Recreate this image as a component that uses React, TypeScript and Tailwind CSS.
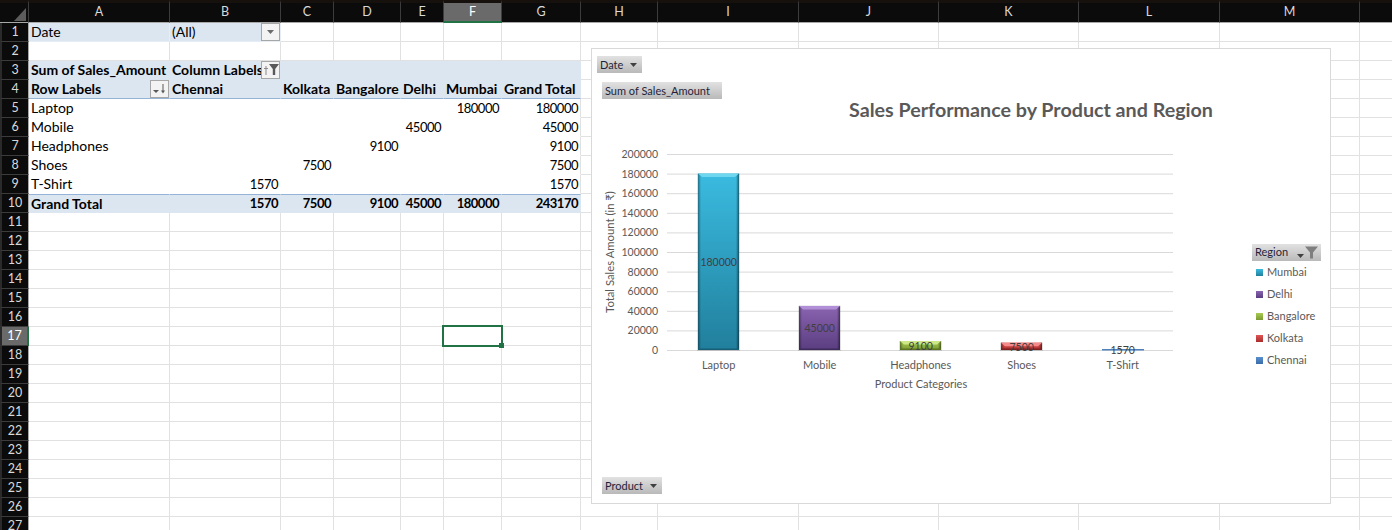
import React from 'react';

const columns = ['A', 'B', 'C', 'D', 'E', 'F', 'G', 'H', 'I', 'J', 'K', 'L', 'M', ''];
const rowNumbers = Array.from({ length: 27 }, (_, i) => i + 1);

type CellData = { text: string; bold?: boolean; right?: boolean };

const pivot: Record<string, CellData> = {
  A1: { text: 'Date' },
  B1: { text: '(All)' },
  A3: { text: 'Sum of Sales_Amount', bold: true },
  B3: { text: 'Column Labels', bold: true },
  A4: { text: 'Row Labels', bold: true },
  B4: { text: 'Chennai', bold: true },
  C4: { text: 'Kolkata', bold: true },
  D4: { text: 'Bangalore', bold: true },
  E4: { text: 'Delhi', bold: true },
  F4: { text: 'Mumbai', bold: true },
  G4: { text: 'Grand Total', bold: true },
  A5: { text: 'Laptop' },
  F5: { text: '180000', right: true },
  G5: { text: '180000', right: true },
  A6: { text: 'Mobile' },
  E6: { text: '45000', right: true },
  G6: { text: '45000', right: true },
  A7: { text: 'Headphones' },
  D7: { text: '9100', right: true },
  G7: { text: '9100', right: true },
  A8: { text: 'Shoes' },
  C8: { text: '7500', right: true },
  G8: { text: '7500', right: true },
  A9: { text: 'T-Shirt' },
  B9: { text: '1570', right: true },
  G9: { text: '1570', right: true },
  A10: { text: 'Grand Total', bold: true },
  B10: { text: '1570', bold: true, right: true },
  C10: { text: '7500', bold: true, right: true },
  D10: { text: '9100', bold: true, right: true },
  E10: { text: '45000', bold: true, right: true },
  F10: { text: '180000', bold: true, right: true },
  G10: { text: '243170', bold: true, right: true },
};

function cellStyle(col: string, row: number) {
  const inTable = col !== '' && 'ABCDEFG'.includes(col);
  if (row === 1 && (col === 'A' || col === 'B')) return 'bg-[#dce6f1] border-b border-r border-[#e6edf5]';
  if (inTable && row === 3) return 'bg-[#dce6f1] border-b border-r border-[#dce6f1]';
  if (inTable && row === 10) return 'bg-[#dce6f1] border-t border-t-[#95b3d7] border-b border-r border-[#dce6f1]';
  if (inTable && row === 4) return 'bg-[#dce6f1] border-b border-b-[#95b3d7] border-r border-r-[#dce6f1]';
  if (col === 'G' && row >= 5 && row <= 9) return 'bg-white border-b border-b-white border-r border-r-[#e1e1e1]';
  if (inTable && row >= 5 && row <= 9) return 'bg-white border-b border-r border-white';
  return 'bg-white border-b border-r border-[#e1e1e1]';
}

function SheetButton({ children, className }: { children: React.ReactNode; className: string }) {
  return (
    <div className={`absolute flex h-[18px] w-[19px] items-center justify-center border border-[#a6a6a6] bg-[#f3f3f3] ${className}`}>
      {children}
    </div>
  );
}

function Arrow({ fill = '#6b6b6b' }: { fill?: string }) {
  return (
    <svg width="7" height="4" viewBox="0 0 7 4">
      <polygon points="0,0 7,0 3.5,4" fill={fill} />
    </svg>
  );
}

function Funnel({ fill = '#595959', width = 10, height = 10 }: { fill?: string; width?: number; height?: number }) {
  return (
    <svg width={width} height={height} viewBox="0 0 13 12">
      <polygon points="0,0 13,0 8,6 8,12 5,12 5,6" fill={fill} />
    </svg>
  );
}

function FilterIcon() {
  return (
    <svg width="16" height="12" viewBox="0 0 16 12">
      <rect x="2.5" y="2" width="1" height="9" fill="#8a8a8a" />
      <rect x="1" y="4" width="4" height="1" fill="#8a8a8a" />
      <polygon points="6,0 16,0 12.2,5 12.2,11 9.8,11 9.8,5" fill="#595959" />
    </svg>
  );
}

function SortIcon() {
  return (
    <svg width="13" height="10" viewBox="0 0 13 10">
      <polygon points="0,6 6,6 3,9" fill="#595959" />
      <rect x="9.5" y="0" width="1" height="8" fill="#595959" />
      <polygon points="8,6.5 12,6.5 10,9.5" fill="#595959" />
    </svg>
  );
}

function FieldButton({ label, className, children }: { label: string; className: string; children?: React.ReactNode }) {
  return (
    <div className={`absolute flex h-[17px] items-center bg-gradient-to-b from-[#e2e2e2] to-[#b9b9b9] pl-[3px] text-[11px] text-[#1f1f3a] ${className}`}>
      <span>{label}</span>
      {children}
    </div>
  );
}

const ticks = [0, 20000, 40000, 60000, 80000, 100000, 120000, 140000, 160000, 180000, 200000];

const bars = [
  { label: 'Laptop', value: 180000, x: 698, top: '#3abbe0', bottom: '#217f9c', edge: '#175f76', light: '#6fd6f0', labelY: 266 },
  { label: 'Mobile', value: 45000, x: 799, top: '#8a64b0', bottom: '#5a3d80', edge: '#3f2a5c', light: '#b18fd6', labelY: 332 },
  { label: 'Headphones', value: 9100, x: 900, top: '#a9cc52', bottom: '#7b9a32', edge: '#5d7624', light: '#cfe887', labelY: 350 },
  { label: 'Shoes', value: 7500, x: 1001, top: '#e25555', bottom: '#a82c2c', edge: '#7f2020', light: '#f58a8a', labelY: 351 },
  { label: 'T-Shirt', value: 1570, x: 1102, top: '#4f81bd', bottom: '#4f81bd', edge: '#4f81bd', light: '#6f9ed6', labelY: 354 },
];

const yFor = (v: number) => 350 - (v / 200000) * 196;

function SalesChart() {
  const numberFont = { fontFamily: 'Lato, sans-serif', fontSize: 10.5 };
  const labelFont = { fontFamily: 'Lato, sans-serif', fontSize: 11 };
  return (
    <svg className="absolute -left-px -top-px" width="740" height="456" viewBox="591 48 740 456">
      <defs>
        {bars.map((b) => (
          <linearGradient key={b.label} id={`bar-${b.label}`} x1="0" y1="0" x2="0" y2="1">
            <stop offset="0" stopColor={b.top} />
            <stop offset="1" stopColor={b.bottom} />
          </linearGradient>
        ))}
        <linearGradient id="edge-left" x1="0" y1="0" x2="1" y2="0">
          <stop offset="0" stopColor="#000" stopOpacity="0.4" />
          <stop offset="1" stopColor="#000" stopOpacity="0" />
        </linearGradient>
        <linearGradient id="edge-right" x1="0" y1="0" x2="1" y2="0">
          <stop offset="0" stopColor="#000" stopOpacity="0" />
          <stop offset="1" stopColor="#000" stopOpacity="0.5" />
        </linearGradient>
      </defs>
      {ticks.map((t) => (
        <g key={t}>
          <line x1="667" x2="1173" y1={yFor(t) + 0.5} y2={yFor(t) + 0.5} stroke="#d9d9d9" />
          <text x="658" y={yFor(t) + 4} textAnchor="end" fill="#595959" style={numberFont}>
            {t}
          </text>
        </g>
      ))}
      {bars.map((b) => {
        const y = yFor(b.value);
        const h = 350 - y;
        if (h < 3) {
          return <rect key={b.label} x={b.x} y={349} width="42" height="1.5" fill={b.top} />;
        }
        return (
          <g key={b.label}>
            <rect x={b.x - 1} y={y} width="43" height={h + 1} fill="#000" opacity="0.12" />
            <rect x={b.x} y={y} width="41" height={h} fill={`url(#bar-${b.label})`} />
            <rect x={b.x} y={y} width="3" height={h} fill="url(#edge-left)" />
            <rect x={b.x + 38} y={y} width="3" height={h} fill="url(#edge-right)" />
            <polygon points={`${b.x},${y} ${b.x + 41},${y} ${b.x + 37},${y + 3.5} ${b.x + 4},${y + 3.5}`} fill={b.light} />
            <rect x={b.x} y={348.5} width="41" height="1.5" fill={b.edge} />
          </g>
        );
      })}
      {bars.map((b) => (
        <g key={b.label}>
          <text x={b.x + 20.7} y={b.labelY} textAnchor="middle" fill="#404040" style={numberFont}>
            {b.value}
          </text>
          <text x={b.x + 20.7} y="369" textAnchor="middle" fill="#595959" style={labelFont}>
            {b.label}
          </text>
        </g>
      ))}
      <text x="921" y="388" textAnchor="middle" fill="#595959" style={labelFont}>
        Product Categories
      </text>
      <text transform="translate(614 252) rotate(-90)" textAnchor="middle" fill="#595959" style={{ fontFamily: 'Lato, sans-serif', fontSize: 11.3 }}>
        Total Sales Amount (in ₹)
      </text>
      <text x="1031" y="117" textAnchor="middle" fill="#595959" style={{ fontFamily: 'Lato, sans-serif', fontSize: 19.7, fontWeight: 700 }}>
        Sales Performance by Product and Region
      </text>
    </svg>
  );
}

const legend = [
  { name: 'Mumbai', from: 'from-[#3abbe0]', to: 'to-[#217f9c]' },
  { name: 'Delhi', from: 'from-[#8a64b0]', to: 'to-[#5a3d80]' },
  { name: 'Bangalore', from: 'from-[#a9cc52]', to: 'to-[#7b9a32]' },
  { name: 'Kolkata', from: 'from-[#e25555]', to: 'to-[#a82c2c]' },
  { name: 'Chennai', from: 'from-[#5a90d0]', to: 'to-[#3a6ca8]' },
];

export default function App() {
  return (
    <div className="relative h-[530px] w-[1392px] overflow-hidden bg-white font-['Lato',sans-serif] text-[14px] text-black">
      <div className="grid w-max grid-cols-[29px_141px_111px_53px_67px_43px_58px_79px_77px_141px_140px_140px_141px_140px_141px] grid-rows-[23px_repeat(27,19px)]">
        <div className="relative border-b border-b-[#a8a8a8] border-r border-r-[#3c3c3c] border-t-[3px] border-t-[#17110e] bg-[#0b0b0b]">
          <svg className="absolute left-[14px] top-[5px]" width="12" height="13" viewBox="0 0 12 13">
            <polygon points="0,13 12,13 12,0" fill="#5c5c5c" />
          </svg>
        </div>
        {columns.map((c) => (
          <div
            key={c}
            className={
              c === 'F'
                ? 'flex items-center justify-center border-b-2 border-b-[#217346] border-r border-r-[#3c3c3c] border-t-[3px] border-t-[#17110e] bg-[#6a6a6a] text-[12.5px] text-white'
                : 'flex items-center justify-center border-b border-b-[#a8a8a8] border-r border-r-[#3c3c3c] border-t-[3px] border-t-[#17110e] bg-[#0b0b0b] text-[12.5px] text-[#d9d9d9]'
            }
          >
            {c}
          </div>
        ))}
        {rowNumbers.map((row) => (
          <React.Fragment key={row}>
            <div
              className={
                row === 17
                  ? 'flex items-center justify-center border-b border-b-[#3c3c3c] border-l-[2px] border-l-[#2a2a2a] border-r-2 border-r-[#217346] bg-[#6a6a6a] pt-px text-[12.5px] text-white'
                  : 'flex items-center justify-center border-b border-b-[#3c3c3c] border-l-[2px] border-l-[#2a2a2a] border-r border-r-[#a8a8a8] bg-[#0b0b0b] pt-px text-[12.5px] text-[#d9d9d9]'
              }
            >
              {row}
            </div>
            {columns.map((col) => {
              const cell = pivot[`${col}${row}`];
              const nudge = cell?.right ? 'justify-end pt-px text-[13px] tracking-[-0.5px]' : row === 10 ? 'justify-start' : 'justify-start pb-px';
              return (
                <div
                  key={col}
                  className={`relative flex items-center whitespace-nowrap px-[2px] ${cellStyle(col, row)} ${nudge} ${cell?.bold ? 'font-bold' : ''}`}
                >
                  {cell?.text}
                  {col === 'B' && row === 1 && (
                    <SheetButton className="right-0 top-0">
                      <Arrow />
                    </SheetButton>
                  )}
                  {col === 'B' && row === 3 && (
                    <SheetButton className="right-0 top-0">
                      <FilterIcon />
                    </SheetButton>
                  )}
                  {col === 'A' && row === 4 && (
                    <SheetButton className="right-0 top-0">
                      <SortIcon />
                    </SheetButton>
                  )}
                </div>
              );
            })}
          </React.Fragment>
        ))}
      </div>

      <div className="absolute left-[442px] top-[325px] h-[22px] w-[61px] border-2 border-[#217346]">
        <div className="absolute -bottom-[3px] -right-[3px] h-[5px] w-[5px] bg-[#217346]" />
      </div>

      <div className="absolute left-[591px] top-[48px] h-[456px] w-[740px] border border-[#d9d9d9] bg-white">
        <SalesChart />
        <FieldButton label="Date" className="left-[5px] top-[7px] w-[45px] pt-px">
          <span className="ml-[7px]">
            <Arrow fill="#404040" />
          </span>
        </FieldButton>
        <FieldButton label="Sum of Sales_Amount" className="left-[10px] top-[33px] w-[120px] pt-px" />
        <FieldButton label="Product" className="left-[10px] top-[428px] w-[60px] pt-px">
          <span className="ml-[7px]">
            <Arrow fill="#404040" />
          </span>
        </FieldButton>
        <FieldButton label="Region" className="left-[660px] top-[195px] w-[69px]">
          <span className="ml-[9px] mt-[6px]">
            <Arrow fill="#404040" />
          </span>
          <span className="ml-[1px]">
            <Funnel fill="#7f7f7f" width={13} height={13} />
          </span>
        </FieldButton>
        <div className="absolute left-[664px] top-[212px] flex flex-col text-[11px] text-[#595959]">
          {legend.map((item) => (
            <div key={item.name} className="flex h-[22px] items-center gap-[4px]">
              <span className={`h-[7px] w-[7px] bg-gradient-to-b ${item.from} ${item.to}`} />
              {item.name}
            </div>
          ))}
        </div>
      </div>
    </div>
  );
}
